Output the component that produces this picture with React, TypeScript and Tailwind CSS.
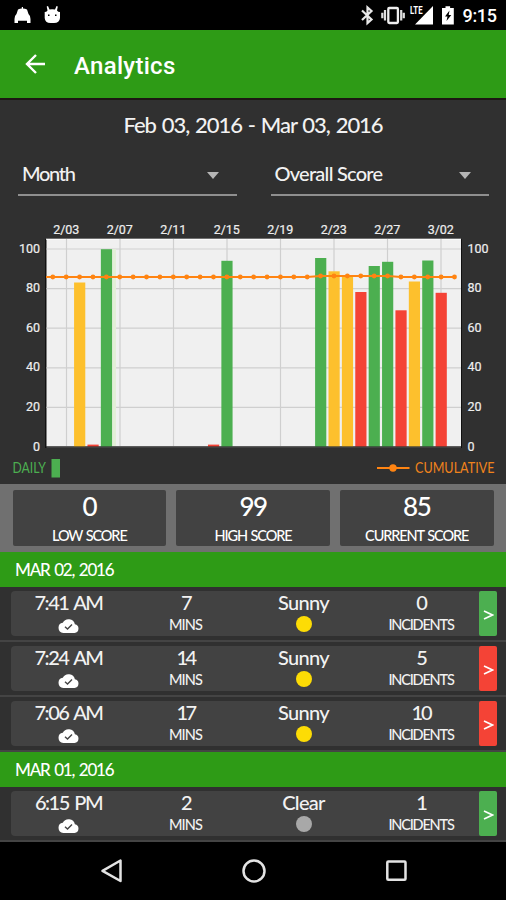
import React from 'react';

interface Trip {
  time: string;
  mins: number;
  weather: string;
  incidents: number;
  good: boolean;
}

interface Day {
  date: string;
  trips: Trip[];
}

interface Bar {
  day: number;
  top: number;
  color: string;
}

const GREEN = '#4caf50';
const AMBER = '#fdc02d';
const RED = '#f44336';

const days: Day[] = [
  {
    date: 'MAR 02, 2016',
    trips: [
      { time: '7:41 AM', mins: 7, weather: 'Sunny', incidents: 0, good: true },
      { time: '7:24 AM', mins: 14, weather: 'Sunny', incidents: 5, good: false },
      { time: '7:06 AM', mins: 17, weather: 'Sunny', incidents: 10, good: false },
    ],
  },
  {
    date: 'MAR 01, 2016',
    trips: [{ time: '6:15 PM', mins: 2, weather: 'Clear', incidents: 1, good: true }],
  },
];

const stats = [
  { value: 0, label: 'LOW SCORE' },
  { value: 99, label: 'HIGH SCORE' },
  { value: 85, label: 'CURRENT SCORE' },
];

const dateLabels = ['2/03', '2/07', '2/11', '2/15', '2/19', '2/23', '2/27', '3/02'];
const scoreLabels = [100, 80, 60, 40, 20, 0];

const bars: Bar[] = [
  { day: 2, top: 282.5, color: AMBER },
  { day: 3, top: 444.6, color: RED },
  { day: 4, top: 249.2, color: GREEN },
  { day: 12, top: 444.6, color: RED },
  { day: 13, top: 260.8, color: GREEN },
  { day: 20, top: 258, color: GREEN },
  { day: 21, top: 271.3, color: AMBER },
  { day: 22, top: 275, color: AMBER },
  { day: 23, top: 292, color: RED },
  { day: 24, top: 266, color: GREEN },
  { day: 25, top: 261.8, color: GREEN },
  { day: 26, top: 310.3, color: RED },
  { day: 27, top: 281.5, color: AMBER },
  { day: 28, top: 260.5, color: GREEN },
  { day: 29, top: 292.8, color: RED },
];

const dayX = (day: number) => 52.8 + day * 13.39;
const lineY = (day: number) => (day >= 20 && day <= 25 ? 276 : 277);

const StatusBar: React.FC = () => (
  <div className="flex h-[30px] shrink-0 items-center bg-black">
    <svg className="h-[30px] w-[506px]" viewBox="0 0 506 30" fill="#fff">
      {/* car */}
      <path d="M18 9.500Q20 8.500 21.800 8.500V7H23V8.500Q25 8.500 27 9.500L28.500 14Q30.800 16 30.500 19V23H27V20.800H18V23H14.500V19Q14.200 16 16.500 14Z" />
      {/* android head */}
      <path d="M48 6L49.500 9.500Q52 8.800 55 9.500L56.500 6L57.800 6.500L57 10.500Q58 12 60 12V18Q59.500 23 54 23H50.500Q45 23 44.700 18V12Q46.500 12 47.500 10.500L46.700 6.500Z" />
      <path d="M48 14.500h1.500v1.500h-1.500zM55 14.500h1.500v1.500h-1.500z" fill="#000" />
      {/* bluetooth */}
      <path d="M362 10.500L371.500 19.500L367.500 23V7.500L371.500 11L362 20" fill="none" stroke="#e8e8e8" strokeWidth="2.200" />
      {/* vibrate */}
      <rect x="388.300" y="8" width="9.600" height="15" rx="1" fill="none" stroke="#eee" strokeWidth="2.300" />
      <path d="M382.300 12.800v5.400M385 10v10.500M401.200 10v10.500M403.800 12.800v5.400" stroke="#ddd" strokeWidth="2.200" />
      {/* signal */}
      <path d="M433 6V24.500H415Z" />
      <text x="410" y="14" fontSize="10" fontWeight="700" fontFamily="Roboto, sans-serif" textLength="12.500" lengthAdjust="spacingAndGlyphs" stroke="#000" strokeWidth="1.500" paintOrder="stroke">LTE</text>
      {/* battery */}
      <path d="M445.500 6.200h4.600v1.800h3.700v16.500h-11.800V8h3.500z" />
      <path d="M449.500 10.500l-4.500 6h2.500l-1 4.500l4.800-6h-2.600z" fill="#000" />
      <text x="462.500" y="22.300" fontSize="18" fontWeight="500" fontFamily="Roboto, sans-serif" textLength="34.500">9:15</text>
    </svg>
  </div>
);

const Select: React.FC<{ label: string; tracking: string }> = ({ label, tracking }) => (
  <div className="flex h-[42px] flex-1 items-center justify-between border-b-2 border-[#8f8f8f] pr-[18px] pl-1">
    <span className={`-mt-0.5 text-xl font-medium text-[#f2f2f2] ${tracking}`}>{label}</span>
    <span className="mt-0.5 h-0 w-0 border-x-[6px] border-t-[7px] border-x-transparent border-t-[#b5b5b5]" />
  </div>
);

const Chart: React.FC = () => (
  <svg className="h-[284px] w-[506px]" viewBox="0 200 506 284">
    <rect x="45" y="239" width="417" height="209" fill="#111" />
    <rect x="46.500" y="239" width="414.500" height="207.500" fill="#f0f0f0" />
    <path d="M46 239.200H461" stroke="#fff" />
    {dateLabels.map((label, i) => (
      <g key={label}>
        <path d={`M${66.5 + i * 53.5} 239V446`} stroke="#cfcfcf" strokeWidth="1.200" />
        <text x={66.2 + i * 53.5} y="234.300" textAnchor="middle" fontSize="12.500" fontFamily="Roboto, sans-serif" fill="#eee" stroke="#eee" strokeWidth="0.200" textLength="26">{label}</text>
      </g>
    ))}
    {scoreLabels.map((score, i) => (
      <g key={score} fontSize="12.500" fontFamily="Roboto, sans-serif" fill="#eee" stroke="#eee" strokeWidth="0.200">
        <path d={`M46.500 ${249 + i * 39.6}H461`} stroke="#cfcfcf" strokeWidth="1.200" />
        <text x="40" y={252.6 + i * 39.6} textAnchor="end">{score}</text>
        <text x="467.500" y={252.6 + i * 39.6}>{score}</text>
      </g>
    ))}
    <path d="M114 249V446" stroke="#e3efd8" strokeWidth="4" />
    {bars.map((bar) => (
      <rect key={bar.day} x={dayX(bar.day) - 5.5} y={bar.top} width="11.200" height={446.7 - bar.top} fill={bar.color} />
    ))}
    <path d="M46 447H462" stroke="#111" strokeWidth="1" />
    {/* cumulative score */}
    <polyline
      points={`46,277 ${Array.from({ length: 31 }, (_, d) => `${dayX(d)},${lineY(d)}`).join(' ')}`}
      fill="none"
      stroke="#ff8412"
      strokeWidth="1.900"
    />
    {Array.from({ length: 31 }, (_, d) => (
      <circle key={d} cx={dayX(d)} cy={lineY(d)} r="2.400" fill="#ff8412" />
    ))}
    {/* legend */}
    <text x="12.500" y="473" fontSize="14.500" fill="#4caf50" textLength="33.500" lengthAdjust="spacingAndGlyphs">DAILY</text>
    <rect x="51.500" y="459" width="8.500" height="18.500" fill="#4caf50" />
    <path d="M377 468H409.500" stroke="#ff8412" strokeWidth="2" />
    <circle cx="393" cy="468" r="3.700" fill="#ff8412" />
    <text x="415" y="473" fontSize="14.500" fill="#f0831c" textLength="79.500" lengthAdjust="spacingAndGlyphs">CUMULATIVE</text>
  </svg>
);

const CloudDone: React.FC = () => (
  <svg className="h-[14px] w-[21px]" viewBox="0 0 21 14">
    <path d="M16.900 5.300A6.500 6.500 0 0 0 4.800 3.700 5.200 5.200 0 0 0 5.300 14H16.500A4.400 4.400 0 0 0 16.900 5.300Z" fill="#fff" />
    <path d="M7 7.800L9.500 10L14 5.500" fill="none" stroke="#444" strokeWidth="1.400" />
  </svg>
);

const cell = 'flex flex-col items-center';
const big = 'h-[24px] text-xl leading-[22px] font-medium';
const small = 'text-[14.500px] leading-[19px] font-medium';

const TripRow: React.FC<{ trip: Trip }> = ({ trip }) => (
  <div className="h-[55px] border-b-2 border-[#444] pt-1 pr-[9px] pl-[11px]">
    <div className="flex h-[45px] rounded-sm bg-[#424242] text-[#f2f2f2]">
      <div className={`${cell} w-[115px]`}>
        <span className={`${big} tracking-[-1.500px] [word-spacing:2px]`}>{trip.time}</span>
        <div className="pt-1">
          <CloudDone />
        </div>
      </div>
      <div className={`${cell} w-[119px]`}>
        <span className={`${big} tracking-[-2.500px]`}>{trip.mins}</span>
        <span className={`${small} tracking-[-0.900px]`}>MINS</span>
      </div>
      <div className={`${cell} w-[117px]`}>
        <span className={`${big} tracking-[-0.700px]`}>{trip.weather}</span>
        <span className={`mt-px h-4 w-4 rounded-full ${trip.weather === 'Sunny' ? 'bg-[#fddc05]' : 'bg-[#a8a8a8]'}`} />
      </div>
      <div className={`${cell} flex-1 pl-px`}>
        <span className={`${big} tracking-[-2px]`}>{trip.incidents}</span>
        <span className={`${small} tracking-[-1.200px]`}>INCIDENTS</span>
      </div>
      <button className={`flex w-[18px] items-center justify-center rounded-xs ${trip.good ? 'bg-[#4caf50]' : 'bg-[#f44336]'}`}>
        <svg className="mt-0.5 h-[12px] w-[11px]" viewBox="0 0 11 12" fill="none" stroke="#fff" strokeWidth="1.700">
          <path d="M1 2L9.500 6L1 10" />
        </svg>
      </button>
    </div>
  </div>
);

const App: React.FC = () => {
  return (
    <div className="flex h-[900px] w-[506px] flex-col overflow-hidden bg-[#303030] font-[Lato,sans-serif]">
      <StatusBar />

      {/* Header */}
      <header className="flex h-[70px] shrink-0 items-center border-b-2 border-[#1d1713] bg-[#2e9b16] pl-[25px] text-white">
        <svg className="h-5 w-5" viewBox="0 0 20 20" fill="none" stroke="#fff" strokeWidth="2.400">
          <path d="M20 10H2M11 1L2 10L11 19" />
        </svg>
        <h1 className="mt-1 ml-[29px] font-[Roboto,sans-serif] text-2xl font-medium tracking-[0.300px]">Analytics</h1>
      </header>

      {/* Filters */}
      <h2 className="h-[54px] shrink-0 pt-[10px] text-center text-[22px] leading-[30px] font-medium tracking-[-1.050px] text-[#f2f2f2] [word-spacing:1.400px]">
        Feb 03, 2016 - Mar 03, 2016
      </h2>
      <div className="flex h-[46px] shrink-0 gap-[34px] pr-[17px] pl-[18px]">
        <Select label="Month" tracking="tracking-[-1.300px]" />
        <Select label="Overall Score" tracking="tracking-[-0.750px]" />
      </div>

      <div className="h-[284px] shrink-0">
        <Chart />
      </div>

      {/* Score summary */}
      <div className="flex h-[68px] shrink-0 gap-[10px] bg-[#707070] px-[12.500px] pt-[6px] pb-[6px]">
        {stats.map((stat) => (
          <div key={stat.label} className="flex flex-1 flex-col items-center rounded-xs bg-[#424242] text-white">
            <span className="h-[36px] text-[26px] leading-[32px] font-medium tracking-[-1.500px]">{stat.value}</span>
            <span className="mt-0.5 text-[14.500px] leading-[20px] font-medium tracking-[-1.100px] [word-spacing:1px]">{stat.label}</span>
          </div>
        ))}
      </div>

      {/* Trips */}
      {days.map((day) => (
        <section key={day.date}>
          <h3 className="flex h-[35px] items-center bg-[#2e9b16] pl-[15px] text-[17px] font-medium tracking-[-1.200px] text-white [word-spacing:1.500px]">{day.date}</h3>
          {day.trips.map((trip) => (
            <TripRow key={trip.time} trip={trip} />
          ))}
        </section>
      ))}

      {/* System navigation */}
      <nav className="mt-auto flex h-[58px] shrink-0 items-center bg-black pl-[100px]">
        <svg className="h-6 w-[310px]" viewBox="0 0 310 24" fill="none" stroke="#e3e3e3" strokeWidth="2.500">
          <path d="M20.500 1.500V22L2.500 11.800Z" strokeLinejoin="round" />
          <circle cx="154" cy="12" r="10.500" />
          <rect x="287.300" y="2.500" width="18.200" height="18.200" rx="1" />
        </svg>
      </nav>
    </div>
  );
};

export default App;
